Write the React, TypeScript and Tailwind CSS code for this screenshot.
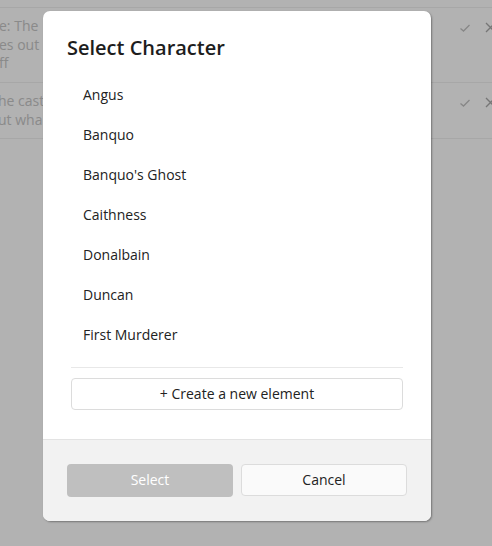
import React from "react";

const chars = ["Angus", "Banquo", "Banquo's Ghost", "Caithness", "Donalbain", "Duncan", "First Murderer"];

function Check() {
  return (
    <svg width="12" height="12" viewBox="0 0 12 12" fill="none" stroke="currentColor" strokeWidth="1.3">
      <path d="M1.5 6.5 L4.5 9 L10.5 3" />
    </svg>
  );
}
function Cross() {
  return (
    <svg width="11" height="11" viewBox="0 0 11 11" fill="none" stroke="currentColor" strokeWidth="1.3">
      <path d="M1 1 L10 10 M10 1 L1 10" />
    </svg>
  );
}

export default function App() {
  return (
    <div className="relative w-[492px] h-[546px] overflow-hidden bg-white" style={{ fontFamily: '"Open Sans", "Liberation Sans", sans-serif' }}>
      {/* background page */}
      <div className="pt-[7px] text-[14px] leading-[18.5px] text-[#c6c6c6]">
        <div className="border-t border-[#efefef] flex h-[75px]">
          <div className="ml-[-1px] pt-[9px] w-[421px] shrink-0 whitespace-nowrap">
            <div>e: The</div>
            <div>es out</div>
            <div>ff</div>
          </div>
          <div className="flex-1 flex items-start pt-[14px] gap-[14px] pl-[39px] text-[#c2c2c2]">
            <Check />
            <span className="text-[#a9a9a9]"><Cross /></span>
          </div>
        </div>
        <div className="border-t border-[#efefef] flex h-[56px]">
          <div className="ml-[-2px] pt-[9px] w-[422px] shrink-0 whitespace-nowrap">
            <div>he cast</div>
            <div>ut wha</div>
          </div>
          <div className="flex-1 flex items-start pt-[14px] gap-[14px] pl-[39px] text-[#c2c2c2]">
            <Check />
            <span className="text-[#a9a9a9]"><Cross /></span>
          </div>
        </div>
        <div className="border-t border-[#efefef]" />
      </div>

      {/* overlay */}
      <div className="absolute inset-0 bg-black/30" />

      {/* modal */}
      <div className="absolute left-[43px] top-[11px] w-[388px] h-[510px] bg-white rounded-[7px] shadow-[1px_1px_2px_rgba(0,0,0,0.35)] flex flex-col overflow-hidden text-[#222]">
        <div className="flex-1 px-6 pt-[23px] flex flex-col min-h-0">
          <h2 className="text-[20px] leading-[28px] font-semibold text-[#1d1d1d]">Select Character</h2>
          <div className="mx-1 mt-[12px] h-[280px] overflow-hidden">
            {chars.map((c) => (
              <div key={c} className="h-10 px-3 flex items-center text-[14px]">{c}</div>
            ))}
          </div>
          <div className="mx-1 mt-[13px] border-t border-[#e8e8e8]" />
          <button className="mx-1 mt-[10px] h-8 rounded-[4px] border border-[#dcdcdc] bg-white text-[14px] leading-[20px] text-[#222] flex items-center justify-center">
            + Create a new element
          </button>
        </div>
        <div className="h-[82px] shrink-0 bg-[#f2f2f2] border-t border-[#e3e3e3] px-6 pt-[24px] flex gap-2">
          <button className="w-[166px] h-[33px] rounded-[4px] bg-[#bfbfbf] text-white text-[14px] pb-[2px]">Select</button>
          <button className="w-[166px] h-[32px] rounded-[4px] bg-[#fafafa] border border-[#dcdcdc] text-[#222] text-[14px] pb-[2px]">Cancel</button>
        </div>
      </div>
    </div>
  );
}
